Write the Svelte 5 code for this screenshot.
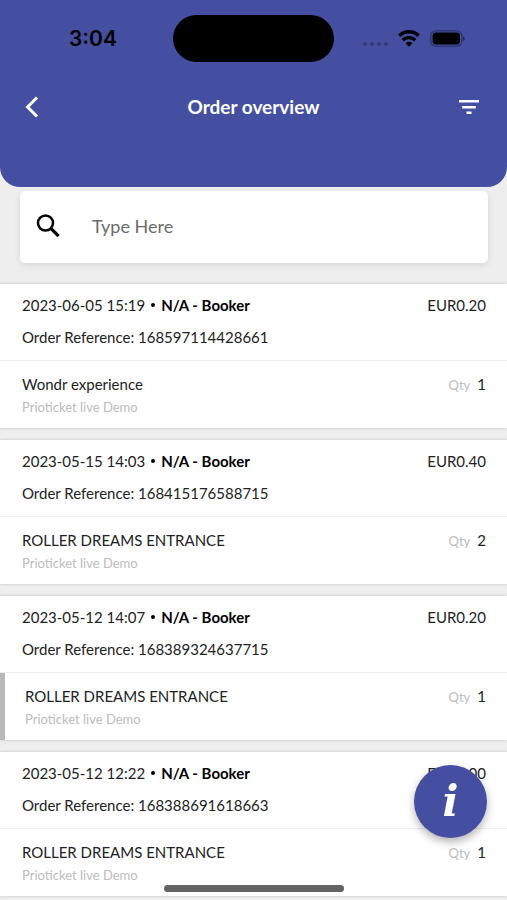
<script lang="ts">
  type Order = {
    date: string;
    reference: string;
    price: string;
    product: string;
    qty: number;
    marked?: boolean;
  };

  const supplier = 'Prioticket live Demo';

  const orders: Order[] = [
    { date: '2023-06-05 15:19', reference: '168597114428661', price: 'EUR0.20', product: 'Wondr experience', qty: 1 },
    { date: '2023-05-15 14:03', reference: '168415176588715', price: 'EUR0.40', product: 'ROLLER DREAMS ENTRANCE', qty: 2 },
    { date: '2023-05-12 14:07', reference: '168389324637715', price: 'EUR0.20', product: 'ROLLER DREAMS ENTRANCE', qty: 1, marked: true },
    { date: '2023-05-12 12:22', reference: '168388691618663', price: 'EUR0.00', product: 'ROLLER DREAMS ENTRANCE', qty: 1 }
  ];

  let query = $state('');
</script>

<div class="screen">
  <header>
    <div class="status">
      <span class="time">3:04</span>
      <span class="island"></span>
      <div class="indicators">
        <svg width="26" height="6" viewBox="0 0 26 6" class="signal" aria-hidden="true">
          <circle cx="3" cy="3" r="2" />
          <circle cx="10" cy="3" r="2" />
          <circle cx="17" cy="3" r="2" />
          <circle cx="24" cy="3" r="2" />
        </svg>
        <svg width="22" height="17" viewBox="0 0 22 17" fill="none" stroke="#000" stroke-width="3.4" aria-hidden="true">
          <path d="M1.3 5.800a13.800 13.800 0 0 1 19.400 0" />
          <path d="M4.800 10.200a8.700 8.700 0 0 1 12.400 0" />
          <path d="M11 16.800l-3.500-3.500a5 5 0 0 1 7 0z" fill="#000" stroke="none" />
        </svg>
        <svg width="35" height="17" viewBox="0 0 35 17" aria-hidden="true">
          <rect x="0.8" y="0.8" width="31" height="15.4" rx="5" fill="none" stroke="#000" stroke-opacity="0.35" stroke-width="1.3" />
          <rect x="2.6" y="2.6" width="27.4" height="11.8" rx="3.4" />
          <path d="M33 6v5c1-.4 1.8-1.300 1.800-2.500S34 6.400 33 6z" fill-opacity="0.5" />
        </svg>
      </div>
    </div>
    <nav>
      <button class="icon-btn" aria-label="Back">
        <svg width="24" height="24" viewBox="0 0 24 24" fill="none" stroke="#fff" stroke-width="3">
          <path d="M17 2.500L7.600 12l9.400 9.500" />
        </svg>
      </button>
      <h1>Order overview</h1>
      <button class="icon-btn filter" aria-label="Filter">
        <svg width="24" height="24" viewBox="0 0 24 24" fill="#fff">
          <path d="M2 5h20v2.400H2zM5.200 11h13.600v2.400H5.200zM9.500 16.600h5V19h-5z" />
        </svg>
      </button>
    </nav>
  </header>

  <main>
    <label class="search">
      <svg width="24" height="24" viewBox="0 0 24 24" fill="none" stroke="#000" stroke-width="2.500" aria-hidden="true">
        <circle cx="9.500" cy="9" r="7.500" />
        <path d="M14.600 14.100l8 8" stroke-width="3.200" />
      </svg>
      <input type="text" placeholder="Type Here" aria-label="Search orders" bind:value={query} />
    </label>

    <div class="orders">
      {#each orders as order (order.reference)}
        <article>
          <div class="summary">
            <div class="line">
              <span class="heading">
                <span>{order.date}</span>
                <span class="dot"></span>
                <b>N/A - Booker</b>
              </span>
              <span>{order.price}</span>
            </div>
            <div class="line">Order Reference: {order.reference}</div>
          </div>
          <div class="item" class:marked={order.marked}>
            <div class="line">
              <span>{order.product}</span>
              <span class="qty"><small>Qty</small>{order.qty}</span>
            </div>
            <div class="supplier">{supplier}</div>
          </div>
        </article>
      {/each}
    </div>
  </main>

  <button class="fab" aria-label="Information">i</button>
  <div class="home-bar"></div>
</div>

<style>
  :global(body) {
    background: #eee;
  }

  .screen {
    min-height: 100vh;
    background: #eee;
    color: #222;
    font-family: Lato, 'Open Sans', sans-serif;
    font-size: 15px;
  }

  header {
    padding: 15px 0 56px;
    background: #444fa2;
    border-radius: 0 0 20px 20px;
  }

  /* STATUS BAR */
  .status {
    display: grid;
    grid-template-columns: 1fr 161px 1fr;
    align-items: center;
  }

  .time {
    padding-left: 69px;
    color: #000;
    font-family: Inter, sans-serif;
    font-size: 21px;
    font-weight: 600;
  }

  .island {
    height: 47px;
    border-radius: 24px;
    background: #000;
  }

  .indicators {
    display: flex;
    align-items: center;
    justify-content: flex-end;
    gap: 10px;
    padding-right: 42px;
  }

  .signal {
    align-self: flex-end;
    opacity: 0.25;
  }

  /* NAV */
  nav {
    display: grid;
    grid-template-columns: 1fr auto 1fr;
    align-items: center;
    height: 48px;
    margin-top: 21px;
    padding: 0 8px;
  }

  h1 {
    margin: 0;
    padding-bottom: 2px;
    color: #fff;
    font-size: 19px;
    font-weight: 700;
  }

  .icon-btn {
    display: flex;
    align-items: center;
    justify-content: center;
    width: 48px;
    height: 48px;
    padding: 0;
    border: none;
    background: none;
    cursor: pointer;
  }

  .filter {
    justify-self: end;
    margin-right: 6px;
  }

  /* SEARCH */
  .search {
    display: flex;
    align-items: center;
    gap: 32px;
    height: 72px;
    margin: 4px 19px 21px 20px;
    padding: 0 16px 3px;
    box-sizing: border-box;
    border-radius: 5px;
    background: #fff;
    box-shadow: 0 2px 6px rgba(0, 0, 0, 0.1);
  }

  .search svg {
    flex: none;
  }

  input {
    flex: 1;
    min-width: 0;
    padding: 0;
    border: none;
    outline: none;
    background: none;
    color: #222;
    font: inherit;
    font-size: 18px;
  }

  input::placeholder {
    color: #6b6b6b;
    opacity: 1;
  }

  /* ORDERS */
  .orders {
    display: flex;
    flex-direction: column;
    gap: 12px;
    padding-bottom: 3px;
  }

  article {
    background: #fff;
    box-shadow: 0 0 3px rgba(0, 0, 0, 0.2);
  }

  .summary {
    display: flex;
    flex-direction: column;
    gap: 8px;
    padding: 9px 21px 11px 22px;
    border-bottom: 1px solid #eee;
  }

  .line {
    display: flex;
    justify-content: space-between;
    line-height: 24px;
  }

  .heading {
    display: flex;
    align-items: center;
    gap: 6px;
  }

  .dot {
    width: 4px;
    height: 4px;
    border-radius: 50%;
    background: #000;
  }

  b {
    color: #000;
  }

  .item {
    padding: 11px 21px 10px 22px;
  }

  .item.marked {
    padding-left: 20px;
    border-left: 5px solid #b8b8b8;
  }

  .supplier {
    color: #bcbcbc;
    font-size: 13px;
    line-height: 22px;
  }

  .qty {
    display: flex;
    align-items: baseline;
    gap: 7px;
  }

  .qty small {
    color: #bcbcbc;
    font-size: 13px;
    line-height: 20px;
  }

  /* OVERLAYS */
  .fab {
    position: fixed;
    right: 20px;
    bottom: 62px;
    width: 73px;
    height: 73px;
    padding: 0;
    border: none;
    border-radius: 50%;
    background: #444fa2;
    box-shadow: 0 4px 8px rgba(0, 0, 0, 0.3);
    color: #fff;
    font-family: 'DejaVu Serif', serif;
    font-size: 42px;
    font-style: italic;
    font-weight: 700;
    line-height: 73px;
    cursor: pointer;
  }

  .home-bar {
    position: fixed;
    bottom: 8px;
    left: 50%;
    width: 180px;
    height: 7px;
    border-radius: 4px;
    background: #636363;
    transform: translateX(-50%);
  }
</style>
